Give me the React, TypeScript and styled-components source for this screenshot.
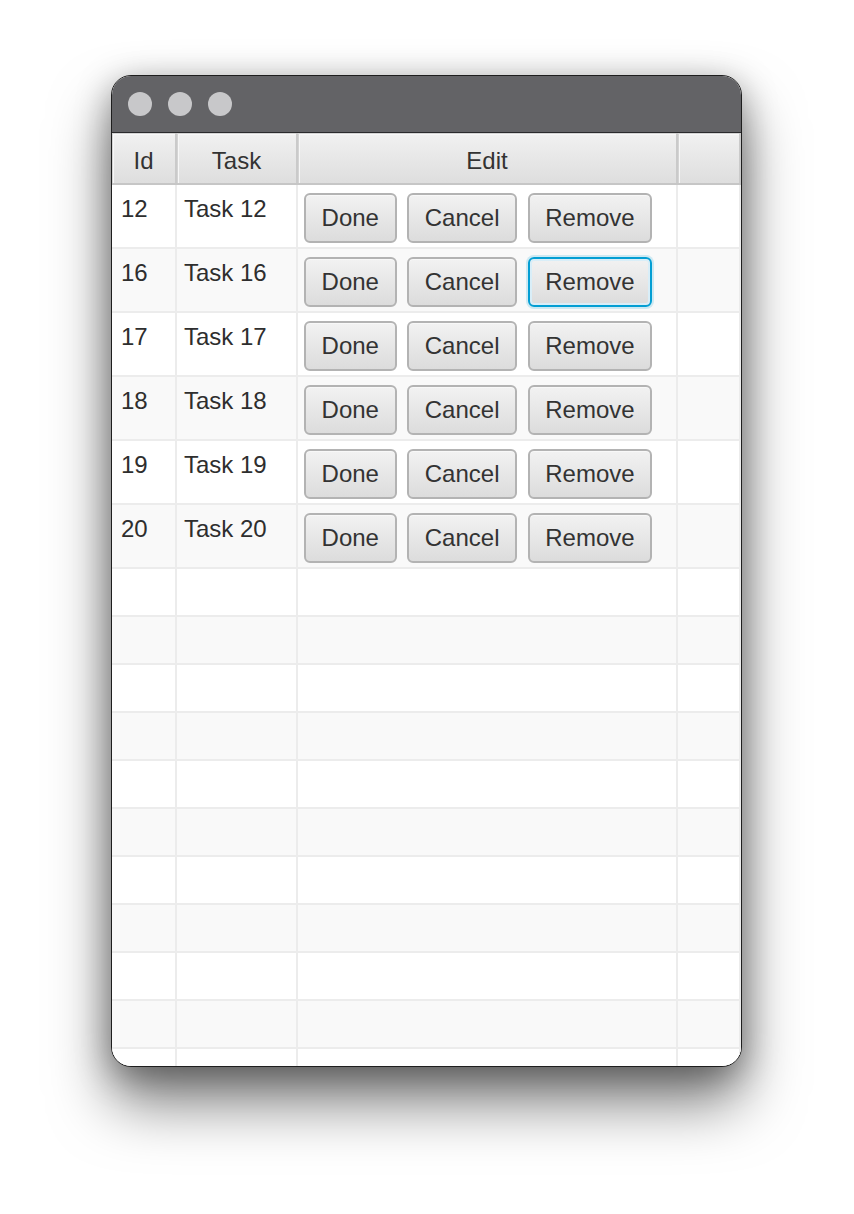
import React from "react";
import styled, { createGlobalStyle } from "styled-components";

const GlobalStyle = createGlobalStyle`
    html, body {
        margin: 0;
        padding: 0;
        background: #ffffff;
    }
    body {
        font-family: "Liberation Sans", Arial, sans-serif;
        width: 854px;
        height: 1214px;
        overflow: hidden;
    }
`;

const COLUMNS = "65px 121px 380px 63px";

const Window = styled.div`
    box-sizing: border-box;
    margin: 75px 0 0 111px;
    width: 631px;
    height: 992px;
    border: 1px solid #1e1e1e;
    border-radius: 20px;
    overflow: hidden;
    display: flex;
    flex-direction: column;
    background: #ffffff;
    box-shadow: 0 36px 60px rgba(0, 0, 0, 0.5), 0 8px 34px rgba(0, 0, 0, 0.35);
`;

const TitleBar = styled.div`
    height: 56px;
    flex-shrink: 0;
    background: #636366;
    border-bottom: 1px solid #2a2a2c;
    display: flex;
    align-items: center;
    gap: 16px;
    padding-left: 16px;
`;

const Light = styled.span`
    width: 24px;
    height: 24px;
    border-radius: 50%;
    background: #c8c8ca;
`;

const Row = styled.div<{ $height: number; $alt?: boolean }>`
    display: grid;
    grid-template-columns: ${COLUMNS};
    height: ${p => p.$height}px;
    flex-shrink: 0;
    box-sizing: border-box;
    background: ${p => (p.$alt ? "#f9f9f9" : "#ffffff")};
    border-bottom: 2px solid #ececec;
`;

const HeaderRow = styled.div`
    display: grid;
    grid-template-columns: ${COLUMNS};
    height: 52px;
    flex-shrink: 0;
    box-sizing: border-box;
    border-bottom: 2px solid #c6c6c6;
`;

const HeaderCell = styled.div`
    box-sizing: border-box;
    display: flex;
    align-items: center;
    justify-content: center;
    padding-top: 5px;
    background: linear-gradient(#f1f1f1, #dedede);
    border-right: 2px solid #cacaca;
    box-shadow: inset 1px 1px 0 #d4d4d4, inset 2px 2px 0 #f7f7f7;
    color: #333333;
    font-size: 24px;
`;

const Cell = styled.div<{ $indent?: number }>`
    box-sizing: border-box;
    border-right: 2px solid #ececec;
    padding: 10px 6px 0 ${p => p.$indent ?? 6}px;
    color: #2e2e2e;
    font-size: 24px;
    line-height: 28px;
    white-space: nowrap;
`;

const ButtonCell = styled.div`
    box-sizing: border-box;
    border-right: 2px solid #ececec;
    padding: 8px 6px 0;
    display: flex;
    gap: 10.6px;
    align-items: flex-start;
`;

const Button = styled.button<{ $focused?: boolean }>`
    height: 50px;
    box-sizing: border-box;
    padding: 0 15.6px;
    border-radius: 6px;
    border: 2px solid ${p => (p.$focused ? "#039ed3" : "#b3b3b3")};
    background: linear-gradient(#f2f2f2, #dcdcdc);
    color: #333333;
    font-family: "Liberation Sans", Arial, sans-serif;
    font-size: 24px;
    box-shadow: ${p =>
        p.$focused
            ? "0 0 0 2px rgba(3, 158, 211, 0.18), inset 0 0 0 2px #d9eef8"
            : "inset 0 1px 0 #f8f8f8"};
    cursor: pointer;
`;

const tasks = [12, 16, 17, 18, 19, 20];

const App = () => {
    return (
        <>
            <GlobalStyle />
            <Window>
                <TitleBar>
                    <Light />
                    <Light />
                    <Light />
                </TitleBar>
                <HeaderRow>
                    <HeaderCell>Id</HeaderCell>
                    <HeaderCell>Task</HeaderCell>
                    <HeaderCell>Edit</HeaderCell>
                    <HeaderCell />
                </HeaderRow>
                {tasks.map((id, i) => (
                    <Row key={id} $height={64} $alt={i % 2 === 1}>
                        <Cell $indent={9}>{id}</Cell>
                        <Cell $indent={7}>Task {id}</Cell>
                        <ButtonCell>
                            <Button>Done</Button>
                            <Button>Cancel</Button>
                            <Button $focused={id === 16}>Remove</Button>
                        </ButtonCell>
                        <Cell />
                    </Row>
                ))}
                {Array.from({ length: 11 }).map((_, i) => (
                    <Row key={"empty" + i} $height={48} $alt={i % 2 === 1}>
                        <Cell />
                        <Cell />
                        <Cell />
                        <Cell />
                    </Row>
                ))}
            </Window>
        </>
    );
};

export default App;
